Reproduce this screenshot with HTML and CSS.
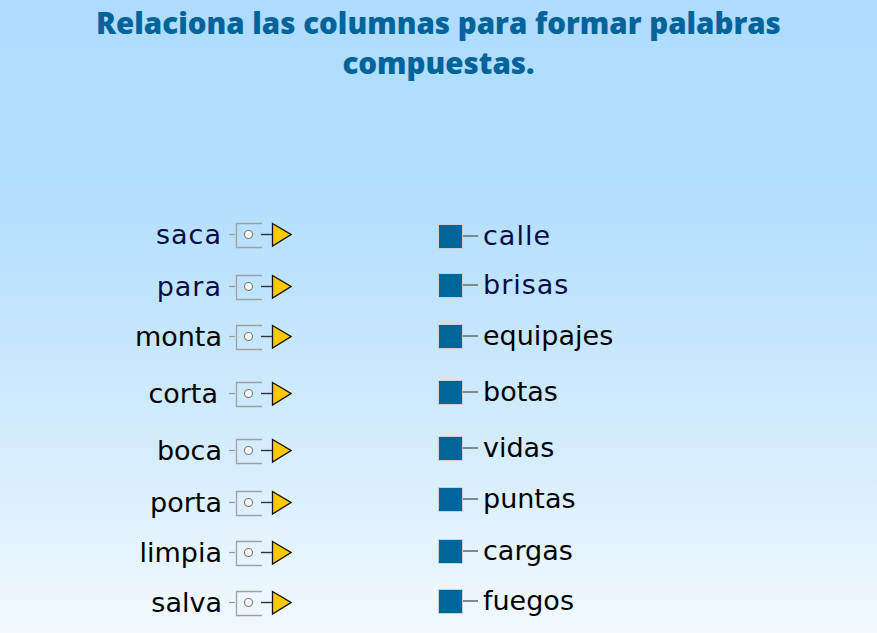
FILE: index.html
```html
<!DOCTYPE html>
<html lang="es">
<head>
<meta charset="utf-8">
<title>Relaciona las columnas</title>
<link rel="stylesheet" href="styles.css">
</head>
<body>
<div class="page">
  <h1 class="title">Relaciona las columnas para formar palabras<br>compuestas.</h1>
  <div class="board">
    <div class="col col-left">
      <div class="lrow spaced"><span class="word">saca</span><svg class="plug" viewBox="0 0 64 27" width="64" height="27"><line x1="1" y1="12.5" x2="7" y2="12.5"/><path class="box" d="M34 1.5H8.5V25.5H34"/><circle cx="20.5" cy="12.5" r="4"/><line class="wire" x1="33" y1="12.5" x2="44" y2="12.5"/><path class="tri" d="M44.5 1.5L63 12.5L44.5 24Z"/></svg></div>
      <div class="lrow spaced"><span class="word">para</span><svg class="plug" viewBox="0 0 64 27" width="64" height="27"><line x1="1" y1="12.5" x2="7" y2="12.5"/><path class="box" d="M34 1.5H8.5V25.5H34"/><circle cx="20.5" cy="12.5" r="4"/><line class="wire" x1="33" y1="12.5" x2="44" y2="12.5"/><path class="tri" d="M44.5 1.5L63 12.5L44.5 24Z"/></svg></div>
      <div class="lrow"><span class="word">monta</span><svg class="plug" viewBox="0 0 64 27" width="64" height="27"><line x1="1" y1="12.5" x2="7" y2="12.5"/><path class="box" d="M34 1.5H8.5V25.5H34"/><circle cx="20.5" cy="12.5" r="4"/><line class="wire" x1="33" y1="12.5" x2="44" y2="12.5"/><path class="tri" d="M44.5 1.5L63 12.5L44.5 24Z"/></svg></div>
      <div class="lrow"><span class="word short">corta</span><svg class="plug" viewBox="0 0 64 27" width="64" height="27"><line x1="1" y1="12.5" x2="7" y2="12.5"/><path class="box" d="M34 1.5H8.5V25.5H34"/><circle cx="20.5" cy="12.5" r="4"/><line class="wire" x1="33" y1="12.5" x2="44" y2="12.5"/><path class="tri" d="M44.5 1.5L63 12.5L44.5 24Z"/></svg></div>
      <div class="lrow"><span class="word">boca</span><svg class="plug" viewBox="0 0 64 27" width="64" height="27"><line x1="1" y1="12.5" x2="7" y2="12.5"/><path class="box" d="M34 1.5H8.5V25.5H34"/><circle cx="20.5" cy="12.5" r="4"/><line class="wire" x1="33" y1="12.5" x2="44" y2="12.5"/><path class="tri" d="M44.5 1.5L63 12.5L44.5 24Z"/></svg></div>
      <div class="lrow"><span class="word">porta</span><svg class="plug" viewBox="0 0 64 27" width="64" height="27"><line x1="1" y1="12.5" x2="7" y2="12.5"/><path class="box" d="M34 1.5H8.5V25.5H34"/><circle cx="20.5" cy="12.5" r="4"/><line class="wire" x1="33" y1="12.5" x2="44" y2="12.5"/><path class="tri" d="M44.5 1.5L63 12.5L44.5 24Z"/></svg></div>
      <div class="lrow"><span class="word">limpia</span><svg class="plug" viewBox="0 0 64 27" width="64" height="27"><line x1="1" y1="12.5" x2="7" y2="12.5"/><path class="box" d="M34 1.5H8.5V25.5H34"/><circle cx="20.5" cy="12.5" r="4"/><line class="wire" x1="33" y1="12.5" x2="44" y2="12.5"/><path class="tri" d="M44.5 1.5L63 12.5L44.5 24Z"/></svg></div>
      <div class="lrow"><span class="word">salva</span><svg class="plug" viewBox="0 0 64 27" width="64" height="27"><line x1="1" y1="12.5" x2="7" y2="12.5"/><path class="box" d="M34 1.5H8.5V25.5H34"/><circle cx="20.5" cy="12.5" r="4"/><line class="wire" x1="33" y1="12.5" x2="44" y2="12.5"/><path class="tri" d="M44.5 1.5L63 12.5L44.5 24Z"/></svg></div>
    </div>
    <div class="col col-right">
      <div class="rrow spaced"><span class="socket"></span><span class="lead"></span><span class="word">calle</span></div>
      <div class="rrow spaced"><span class="socket"></span><span class="lead"></span><span class="word">brisas</span></div>
      <div class="rrow"><span class="socket"></span><span class="lead"></span><span class="word">equipajes</span></div>
      <div class="rrow"><span class="socket"></span><span class="lead"></span><span class="word">botas</span></div>
      <div class="rrow"><span class="socket"></span><span class="lead"></span><span class="word">vidas</span></div>
      <div class="rrow"><span class="socket"></span><span class="lead"></span><span class="word">puntas</span></div>
      <div class="rrow"><span class="socket"></span><span class="lead"></span><span class="word">cargas</span></div>
      <div class="rrow"><span class="socket"></span><span class="lead"></span><span class="word">fuegos</span></div>
    </div>
  </div>
</div>
</body>
</html>
```

FILE: styles.css
```css
html, body {
  margin: 0;
  padding: 0;
}

body {
  width: 877px;
  height: 633px;
  overflow: hidden;
  background: linear-gradient(to bottom, #afdcfe 0%, #b3defe 30%, #d4ecfd 70%, #f2f9ff 100%);
  font-family: "DejaVu Sans", Verdana, sans-serif;
}

.page {
  display: flex;
  flex-direction: column;
  height: 633px;
}

.title {
  margin: 0;
  padding-top: 3px;
  text-align: center;
  font-family: "Open Sans", "Lato", sans-serif;
  font-weight: 800;
  font-size: 29.5px;
  line-height: 40px;
  color: #00649a;
  letter-spacing: 0;
}

.board {
  display: flex;
  margin-top: 139px;
}

.col {
  display: flex;
  flex-direction: column;
}

.col-left {
  width: 292px;
}

.col-right {
  margin-left: 146px;
}

.lrow,
.rrow {
  display: flex;
  align-items: center;
  height: 26px;
}

.lrow {
  justify-content: flex-end;
}

.lrow .word {
  margin-right: 6px;
}

.lrow .word.short {
  margin-right: 10px;
}

.word {
  font-size: 27px;
  line-height: 26px;
  color: #000;
  white-space: nowrap;
}

.spaced .word {
  color: #0b0b45;
  letter-spacing: 1px;
}

.lrow:nth-child(2) { margin-top: 26px; }
.lrow:nth-child(3) { margin-top: 24px; }
.lrow:nth-child(4) { margin-top: 31px; }
.lrow:nth-child(5) { margin-top: 31px; }
.lrow:nth-child(6) { margin-top: 26px; }
.lrow:nth-child(7) { margin-top: 24px; }
.lrow:nth-child(8) { margin-top: 24px; }

.rrow:nth-child(1) { margin-top: 1px; }
.rrow:nth-child(2) { margin-top: 23px; }
.rrow:nth-child(3) { margin-top: 25px; }
.rrow:nth-child(4) { margin-top: 30px; }
.rrow:nth-child(5) { margin-top: 30px; }
.rrow:nth-child(6) { margin-top: 25px; }
.rrow:nth-child(7) { margin-top: 26px; }
.rrow:nth-child(8) { margin-top: 24px; }

.plug {
  display: block;
  flex: none;
}

.plug line {
  stroke: #9a9a9a;
  stroke-width: 1.2;
}

.plug .wire {
  stroke: #333;
  stroke-width: 1.4;
}

.plug .box {
  fill: none;
  stroke: #a0a0a0;
  stroke-width: 1.3;
}

.plug circle {
  fill: #fff;
  stroke: #7a7a7a;
  stroke-width: 1.2;
}

.plug .tri {
  fill: #ffc800;
  stroke: #111;
  stroke-width: 1.3;
  stroke-linejoin: miter;
}

.socket {
  flex: none;
  width: 23px;
  height: 23px;
  background: #006699;
  border: 1px solid #c9d0d4;
}

.lead {
  flex: none;
  width: 15px;
  height: 2px;
  background: #7f8a90;
  margin-right: 5px;
}
```
